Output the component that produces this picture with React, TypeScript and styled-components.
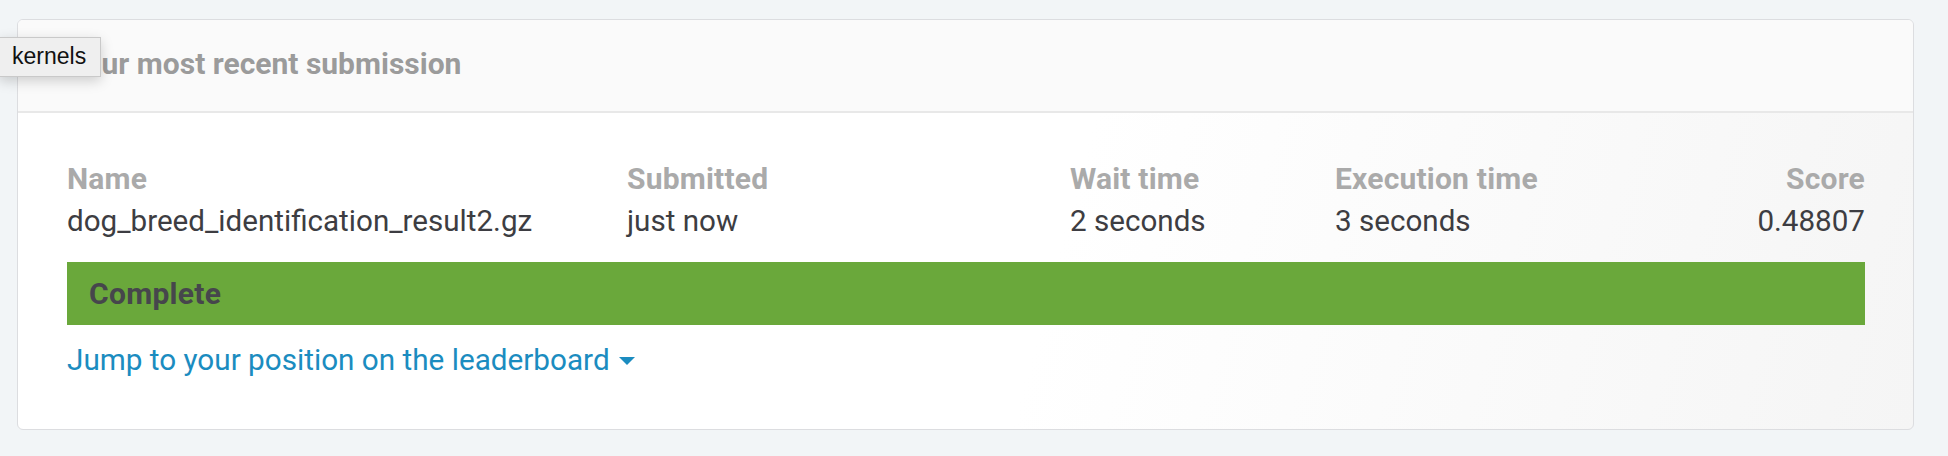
import React from "react";
import styled, { createGlobalStyle } from "styled-components";

const GlobalStyle = createGlobalStyle`
  html, body {
    margin: 0;
    padding: 0;
    background: #f2f5f7;
    font-family: Roboto, "Liberation Sans", Arial, sans-serif;
  }
`;

const Page = styled.div`
  position: relative;
  padding: 19px 34px 26px 17px;
  height: 456px;
  box-sizing: border-box;
`;

const Card = styled.section`
  border: 1px solid #dcdde0;
  border-radius: 6px;
  background: linear-gradient(105deg, #ffffff 55%, #f5f5f5 100%);
  overflow: hidden;
  height: 411px;
  box-sizing: border-box;
`;

const CardHeader = styled.header`
  display: flex;
  align-items: center;
  height: 93px;
  padding: 0 49px 4px;
  background: #fafafa;
  border-bottom: 2px solid #e8e8e8;
  box-sizing: border-box;
`;

const HeaderTitle = styled.h2`
  margin: 0;
  font-size: 30px;
  font-weight: 700;
  color: #9b9b9b;
`;

const CardBody = styled.div`
  padding: 45px 48px 0 49px;
`;

const SubmissionTable = styled.div`
  display: grid;
  grid-template-columns: 560px 443px 265px 1fr 1fr;
`;

const Cell = styled.div<{ $head?: boolean; $right?: boolean }>`
  font-size: ${p => (p.$head ? "30px" : "29.6px")};
  line-height: 42px;
  font-weight: ${p => (p.$head ? 700 : 400)};
  color: ${p => (p.$head ? "#aaaaaa" : "#3d3d42")};
  text-align: ${p => (p.$right ? "right" : "left")};
  letter-spacing: ${p => (p.$head ? "0.2px" : "0")};
  white-space: nowrap;
`;

const StatusBar = styled.div`
  display: flex;
  align-items: center;
  height: 63px;
  margin-top: 20px;
  padding: 0 22px;
  background: #6aa83b;
  font-size: 30px;
  font-weight: 700;
  letter-spacing: 0.3px;
  color: #46464c;
`;

const LeaderboardLink = styled.a`
  display: inline-flex;
  align-items: center;
  gap: 9px;
  margin-top: 17px;
  font-size: 29.7px;
  line-height: 36px;
  color: #1b8cc0;
  text-decoration: none;
  cursor: pointer;
`;

const Caret = styled.span`
  width: 0;
  height: 0;
  border-left: 8px solid transparent;
  border-right: 8px solid transparent;
  border-top: 8px solid #1b8cc0;
  margin-top: 2px;
`;

const Tooltip = styled.div`
  position: absolute;
  left: -1px;
  top: 37px;
  padding: 6px 14px 7px 12px;
  background: #efefef;
  border: 1px solid #c9c9c9;
  box-shadow: 0 4px 12px rgba(0, 0, 0, 0.18);
  font-family: "Liberation Sans", Arial, sans-serif;
  font-size: 23px;
  line-height: 25px;
  color: #111;
`;

const columns = [
  { head: "Name", value: "dog_breed_identification_result2.gz" },
  { head: "Submitted", value: "just now" },
  { head: "Wait time", value: "2 seconds" },
  { head: "Execution time", value: "3 seconds" },
  { head: "Score", value: "0.48807", right: true },
];

export default function App() {
  return (
    <>
      <GlobalStyle />
      <Page>
        <Card>
          <CardHeader>
            <HeaderTitle>Your most recent submission</HeaderTitle>
          </CardHeader>
          <CardBody>
            <SubmissionTable>
              {columns.map(c => (
                <Cell key={c.head} $head $right={c.right}>{c.head}</Cell>
              ))}
              {columns.map(c => (
                <Cell key={c.head + "-v"} $right={c.right}>{c.value}</Cell>
              ))}
            </SubmissionTable>
            <StatusBar>Complete</StatusBar>
            <LeaderboardLink>
              Jump to your position on the leaderboard
              <Caret />
            </LeaderboardLink>
          </CardBody>
        </Card>
        <Tooltip>kernels</Tooltip>
      </Page>
    </>
  );
}
